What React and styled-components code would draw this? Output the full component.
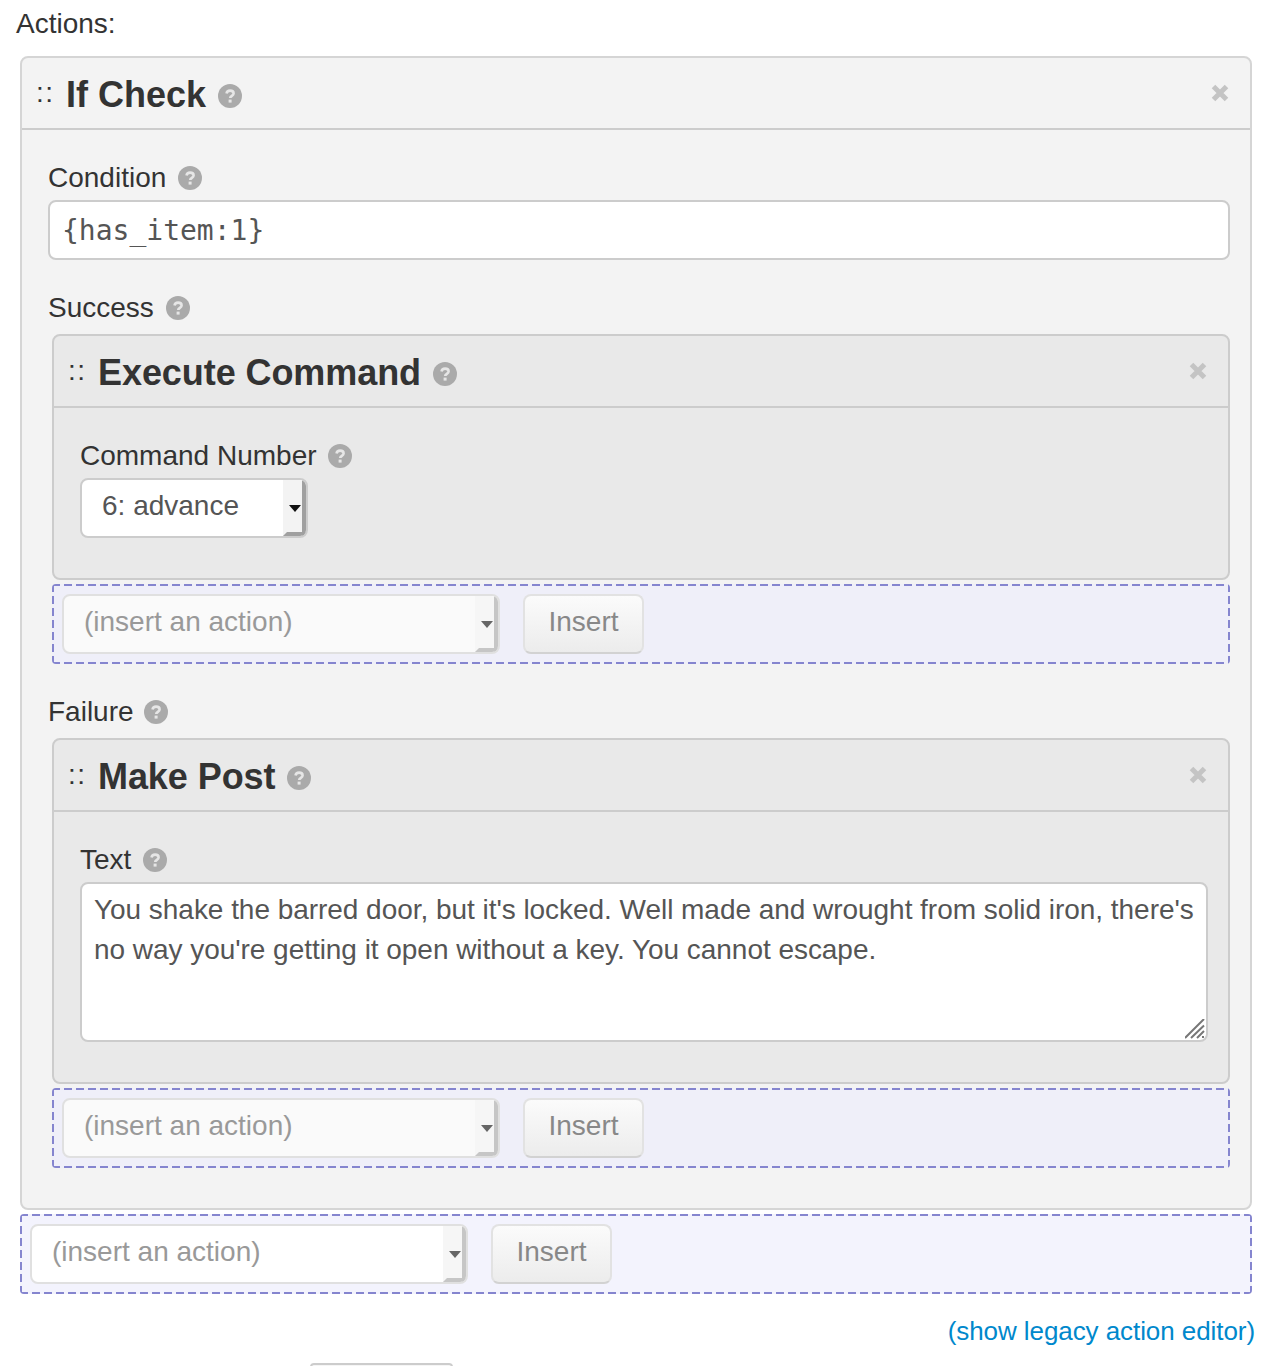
import React from 'react';
import styled, { createGlobalStyle } from 'styled-components';

const GlobalStyle = createGlobalStyle`
  html, body {
    margin: 0;
    height: 1366px;
    overflow: hidden;
    background: #fff;
  }
  body {
    font-family: "Liberation Sans", Arial, sans-serif;
    font-size: 28px;
    line-height: 40px;
    color: #333;
  }
`;

const Page = styled.div`
  padding: 4px 20px 0;
`;

const PageLabel = styled.div`
  height: 40px;
  margin: 0 0 12px -4px;
`;

const Panel = styled.section`
  border: 2px solid ${(p) => (p.$nested ? '#ccc' : '#d5d5d5')};
  border-radius: 8px;
  background: ${(p) => (p.$nested ? '#e9e9e9' : '#f3f3f3')};
  margin-left: ${(p) => (p.$nested ? '4px' : '0')};
`;

const PanelHeader = styled.header`
  display: flex;
  align-items: center;
  box-sizing: border-box;
  height: 72px;
  padding: 4px 21px 0 14px;
  border-bottom: 2px solid #ccc;
`;

const Handle = styled.span`
  width: 30px;
  font-size: 28px;
  letter-spacing: 1.5px;
  line-height: 1;
  position: relative;
  top: -2px;
`;

const Title = styled.h3`
  margin: 0 12px 0 0;
  font-size: 36px;
  line-height: 40px;
  font-weight: 700;
  letter-spacing: ${(p) => (p.$nested ? '-0.07px' : '0')};
  color: #333;
`;

const Close = styled.svg`
  width: 18px;
  height: 18px;
  margin-left: auto;
  margin-top: -4px;
`;

const PanelBody = styled.div`
  padding: 28px 20px 40px 26px;
`;

const Field = styled.div`
  & + & {
    margin-top: 28px;
  }
`;

const Label = styled.label`
  display: flex;
  align-items: center;
  gap: ${(p) => p.$iconGap || 12}px;
  height: 40px;
  margin-bottom: ${(p) => p.$gap || 2}px;
`;

const HelpIcon = styled.svg`
  width: 24px;
  height: 24px;
  flex: none;
  margin-top: ${(p) => (p.$raised ? 2 : 0)}px;
`;

const TextInput = styled.input`
  display: block;
  box-sizing: border-box;
  width: 100%;
  height: 60px;
  padding: 0 12px;
  border: 2px solid #ccc;
  border-radius: 8px;
  background: #fff;
  outline: none;
  font-family: "DejaVu Sans Mono", monospace;
  font-size: 28px;
  color: #555;
`;

const TextAreaWrap = styled.div`
  position: relative;
  height: 160px;
`;

const TextArea = styled.textarea`
  display: block;
  box-sizing: border-box;
  width: 100%;
  height: 160px;
  padding: 6px 6px 6px 12px;
  border: 2px solid #ccc;
  border-radius: 8px;
  background: #fff;
  outline: none;
  resize: none;
  font-family: "Liberation Sans", Arial, sans-serif;
  font-size: 28px;
  line-height: 40px;
  letter-spacing: -0.04px;
  color: #555;
`;

const Grip = styled.svg`
  position: absolute;
  right: 3px;
  bottom: 3px;
  width: 20px;
  height: 20px;
`;

const SelectBox = styled.div`
  display: flex;
  box-sizing: border-box;
  flex: none;
  width: ${(p) => p.$width}px;
  height: 60px;
  border: 2px solid ${(p) => (p.$muted ? '#e0e0e0' : '#ccc')};
  border-radius: 8px;
  background: ${(p) => (p.$muted ? p.$fill : '#fff')};
  overflow: hidden;
`;

const SelectText = styled.span`
  flex: 1;
  padding-left: 20px;
  line-height: 52px;
  color: ${(p) => (p.$muted ? '#999' : '#555')};
`;

const SelectArrow = styled.span`
  display: flex;
  align-items: center;
  justify-content: center;
  box-sizing: border-box;
  width: 23px;
  height: 56px;
  background: ${(p) => (p.$muted ? '#f6f6f6' : '#f3f3f3')};
  border-style: solid;
  border-width: 0 4px 4px 4px;
  border-color: transparent ${(p) => (p.$muted ? '#c6c6c6' : '#a0a0a0')} ${(p) => (p.$muted ? '#c6c6c6' : '#a0a0a0')} transparent;
  &::after {
    content: '';
    margin-top: 4px;
    border-style: solid;
    border-width: 7px 6px 0;
    border-color: ${(p) => (p.$muted ? '#666' : '#111')} transparent transparent;
  }
`;

const dash = (angle) =>
  `repeating-linear-gradient(${angle}, #8585cf 0 8px, transparent 8px 12px)`;

const InsertZone = styled.div`
  display: flex;
  align-items: center;
  gap: 23px;
  box-sizing: border-box;
  height: 80px;
  margin: 4px 0 0 ${(p) => (p.$nested ? '4px' : '0')};
  padding: 0 10px;
  border-radius: 4px;
  background-color: ${(p) => (p.$nested ? '#efeff9' : '#f3f3fd')};
  background-image: ${dash('90deg')}, ${dash('90deg')}, ${dash('180deg')}, ${dash('180deg')};
  background-size: 100% 2px, 100% 2px, 2px 100%, 2px 100%;
  background-position: 0 0, 0 100%, 0 0, 100% 0;
  background-repeat: no-repeat;
`;

const InsertButton = styled.button`
  box-sizing: border-box;
  width: 121px;
  height: 60px;
  padding: 0 0 4px;
  border: 2px solid #e2e2e2;
  border-bottom-color: #d2d2d2;
  border-radius: 8px;
  background: linear-gradient(#fbfbfb, #ececec);
  font-family: "Liberation Sans", Arial, sans-serif;
  font-size: 28px;
  color: #888;
`;

const LinkRow = styled.div`
  display: flex;
  justify-content: flex-end;
  margin: 17px -3px 0 0;
`;

const LegacyLink = styled.a`
  color: #0088cc;
  font-size: 26px;
  letter-spacing: -0.07px;
  text-decoration: none;
`;

const SaveButton = styled.button`
  display: block;
  box-sizing: border-box;
  width: 143px;
  height: 60px;
  margin: 12px 0 0 290px;
  border: 2px solid #ccc;
  border-radius: 4px;
  background: #f5f5f5;
`;

const Help = ({ raised }) => (
  <HelpIcon viewBox="0 0 24 24" $raised={raised}>
    <circle cx="12" cy="12" r="12" fill="#aaa" />
    <path d="M8.5 9.5c.3-1.900 1.800-2.900 3.600-2.900 2 0 3.500 1.100 3.500 2.800 0 2.400-3.400 2.400-3.400 4.700" fill="none" stroke="#e6e6e6" strokeWidth="2.600" />
    <rect x="10.600" y="15.600" width="3" height="3" fill="#e6e6e6" />
  </HelpIcon>
);

const CloseIcon = () => (
  <Close viewBox="0 0 18 18">
    <path d="M2.500 2.500l13 13M15.500 2.500l-13 13" stroke="#c4c4c4" strokeWidth="5" />
  </Close>
);

const Select = ({ value, width, muted, fill }) => (
  <SelectBox $width={width} $muted={muted} $fill={fill}>
    <SelectText $muted={muted}>{value}</SelectText>
    <SelectArrow $muted={muted} />
  </SelectBox>
);

const Insert = ({ nested }) => (
  <InsertZone $nested={nested}>
    <Select value="(insert an action)" width={438} muted fill={nested ? '#fafafa' : '#fff'} />
    <InsertButton>Insert</InsertButton>
  </InsertZone>
);

const Action = ({ title, nested, children }) => (
  <Panel $nested={nested}>
    <PanelHeader>
      <Handle>::</Handle>
      <Title $nested={nested}>{title}</Title>
      <Help raised />
      <CloseIcon />
    </PanelHeader>
    <PanelBody>{children}</PanelBody>
  </Panel>
);

const postText =
  "You shake the barred door, but it's locked. Well made and wrought from solid iron, there's no way you're getting it open without a key. You cannot escape.";

export default function App() {
  return (
    <Page>
      <GlobalStyle />
      <PageLabel>Actions:</PageLabel>
      <Action title="If Check">
        <Field>
          <Label>Condition <Help /></Label>
          <TextInput readOnly value="{has_item:1}" />
        </Field>
        <Field>
          <Label $gap={6}>Success <Help /></Label>
          <Action title="Execute Command" nested>
            <Label $iconGap={11}>Command Number <Help /></Label>
            <Select value="6: advance" width={228} />
          </Action>
          <Insert nested />
        </Field>
        <Field>
          <Label $gap={6} $iconGap={10}>Failure <Help /></Label>
          <Action title="Make Post" nested>
            <Label>Text <Help /></Label>
            <TextAreaWrap>
              <TextArea readOnly value={postText} />
              <Grip viewBox="0 0 20 20">
                <path d="M0 19L19 0M6 19L19 6.500M12 19l7-7" stroke="#777" strokeWidth="2" />
                <rect x="17" y="17" width="2" height="2" fill="#777" />
              </Grip>
            </TextAreaWrap>
          </Action>
          <Insert nested />
        </Field>
      </Action>
      <Insert />
      <LinkRow>
        <LegacyLink href="#">(show legacy action editor)</LegacyLink>
      </LinkRow>
      <SaveButton />
    </Page>
  );
}
